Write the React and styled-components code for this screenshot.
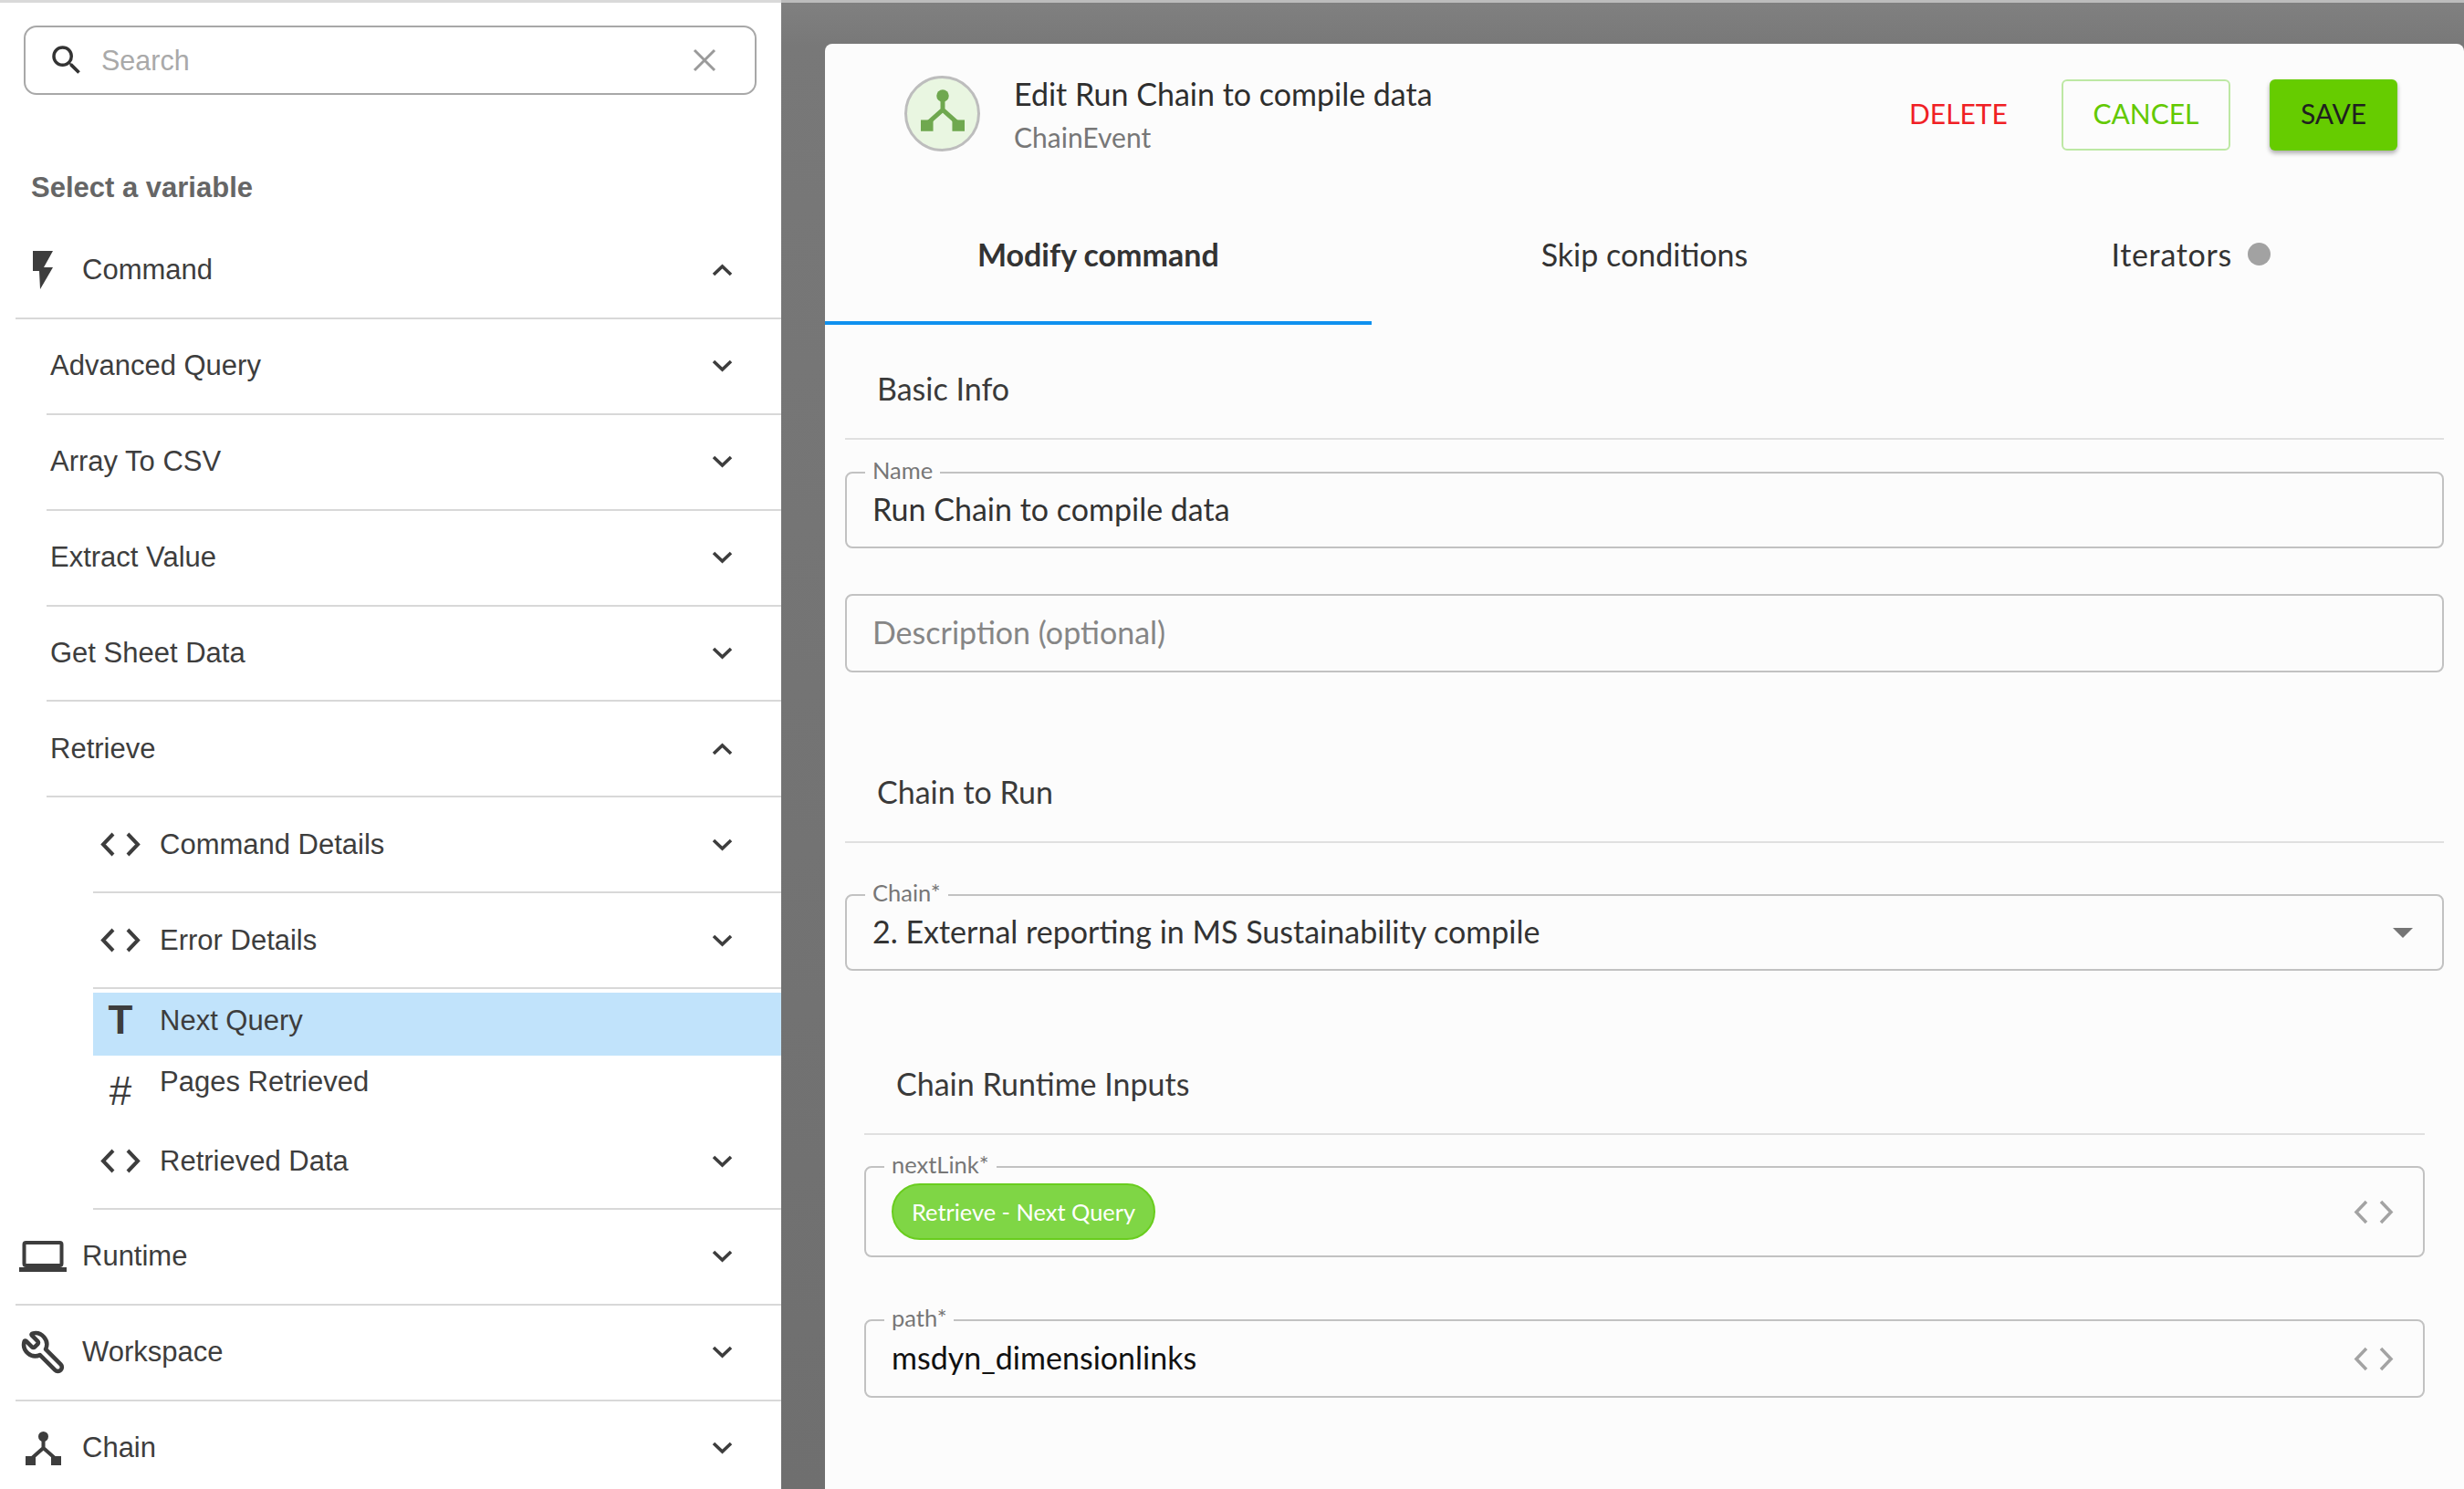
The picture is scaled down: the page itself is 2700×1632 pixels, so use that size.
import React from 'react';
import styled, { createGlobalStyle } from 'styled-components';
import { Wrench } from 'lucide-react';

const GlobalStyle = createGlobalStyle`
  html, body {
    margin: 0;
    padding: 0;
    background: #fff;
  }
  * {
    box-sizing: border-box;
  }
`;

const Page = styled.div`
  display: flex;
  width: 2700px;
  height: 1632px;
  overflow: hidden;
`;

/* sidebar */

const Sidebar = styled.aside`
  width: 856px;
  flex: none;
  height: 100%;
  background: #fff;
  border-top: 3px solid #d9d9d9;
  font-family: 'Liberation Sans', Arial, sans-serif;
  color: #3d3d3d;
`;

const SearchBox = styled.div`
  display: flex;
  align-items: center;
  height: 76px;
  margin: 25px 27px 0 26px;
  padding: 0 42px 0 24px;
  border: 2px solid #a8a8a8;
  border-radius: 14px;
`;

const SearchText = styled.span`
  flex: 1;
  margin-left: 17px;
  font-size: 30.5px;
  color: #a9a9a9;
`;

const SidebarTitle = styled.div`
  margin: 82px 0 19px 34px;
  height: 40px;
  line-height: 40px;
  font-size: 31px;
  font-weight: 700;
  color: #666;
`;

const Row = styled.div`
  display: flex;
  align-items: center;
  height: ${p => p.$height || 104.9}px;
  margin-top: ${p => (p.$active ? 4 : 0)}px;
  margin-left: ${p => p.$indent}px;
  padding-left: ${p => (p.$level === 2 ? 4 : 0)}px;
  padding-right: 53px;
  border-bottom: ${p => (p.$plain ? 'none' : '2px solid #d8d8d8')};
  background: ${p => (p.$active ? '#c1e3fb' : 'transparent')};
  font-size: 31px;
`;

const IconSlot = styled.span`
  display: flex;
  align-items: center;
  justify-content: center;
  flex: none;
  width: 60px;
  margin-right: 13px;
`;

const RowLabel = styled.span`
  flex: 1;
  position: relative;
  top: ${p => p.$shift || 0}px;
`;

const TypeGlyph = styled.span`
  font-size: ${p => p.$size}px;
  font-weight: ${p => p.$weight};
  line-height: 1;
  position: relative;
  top: ${p => p.$shift}px;
`;

const FlippedWrench = styled(Wrench)`
  transform: scaleX(-1);
`;

const iconColor = '#3d3d3d';

const BoltIcon = () => (
  <svg width="22" height="42" viewBox="0 0 22 42">
    <polygon points="0,0 22,0 12,18 22,18 8,42 7,22 0,22" fill={iconColor} />
  </svg>
);

const LaptopIcon = () => (
  <svg width="52" height="34" viewBox="0 0 52 34">
    <rect x="5.5" y="2" width="41" height="25" rx="2" fill="none" stroke={iconColor} strokeWidth="4" />
    <rect x="0" y="29" width="52" height="5" fill={iconColor} />
  </svg>
);

const ChainGlyph = ({ color = iconColor, width = 39, height = 37, className }) => (
  <svg className={className} width={width} height={height} viewBox="0 0 39 37">
    <circle cx="19.5" cy="5.5" r="5.5" fill={color} />
    <path d="M19.5 8 V18 L6 30 M19.5 18 L33 30" fill="none" stroke={color} strokeWidth="4" />
    <rect x="0" y="27" width="11" height="10" fill={color} />
    <rect x="28" y="27" width="11" height="10" fill={color} />
  </svg>
);

const AvatarGlyph = styled(ChainGlyph)`
  margin-top: -8px;
`;

const CodeIcon = ({ color = iconColor, strokeWidth = 4, width = 44, height = 27 }) => (
  <svg width={width} height={height} viewBox="0 0 44 27">
    <path
      d="M14 2 L3 13.5 L14 25 M30 2 L41 13.5 L30 25"
      fill="none"
      stroke={color}
      strokeWidth={strokeWidth}
    />
  </svg>
);

const Chevron = ({ up }) => (
  <svg width="23" height="14" viewBox="0 0 23 14">
    <path
      d={up ? 'M2 12 L11.5 3 L21 12' : 'M2 2 L11.5 11 L21 2'}
      fill="none"
      stroke={iconColor}
      strokeWidth="3.6"
    />
  </svg>
);

const rows = [
  { label: 'Command', level: 1, icon: <BoltIcon />, open: true },
  { label: 'Advanced Query', level: 2 },
  { label: 'Array To CSV', level: 2 },
  { label: 'Extract Value', level: 2 },
  { label: 'Get Sheet Data', level: 2 },
  { label: 'Retrieve', level: 2, open: true },
  { label: 'Command Details', level: 3, icon: <CodeIcon /> },
  { label: 'Error Details', level: 3, icon: <CodeIcon /> },
  {
    label: 'Next Query',
    level: 3,
    leaf: true,
    active: true,
    height: 69,
    shift: -4,
    icon: <TypeGlyph $size={44} $weight={700} $shift={-5}>T</TypeGlyph>
  },
  {
    label: 'Pages Retrieved',
    level: 3,
    leaf: true,
    height: 64,
    shift: -3,
    icon: <TypeGlyph $size={44} $weight={400} $shift={7}>#</TypeGlyph>
  },
  { label: 'Retrieved Data', level: 3, icon: <CodeIcon /> },
  { label: 'Runtime', level: 1, icon: <LaptopIcon /> },
  { label: 'Workspace', level: 1, icon: <FlippedWrench size={50} color={iconColor} strokeWidth={2.2} /> },
  { label: 'Chain', level: 1, icon: <ChainGlyph /> }
];

const indents = { 1: 17, 2: 51, 3: 102 };

const VariableRow = ({ row }) => (
  <Row
    $indent={indents[row.level]}
    $level={row.level}
    $height={row.height}
    $plain={row.leaf}
    $active={row.active}
  >
    {row.icon && <IconSlot>{row.icon}</IconSlot>}
    <RowLabel $shift={row.shift}>{row.label}</RowLabel>
    {!row.leaf && <Chevron up={row.open} />}
  </Row>
);

/* modal */

const Scrim = styled.main`
  flex: 1;
  height: 100%;
  padding: 45px 0 0 48px;
  border-top: 3px solid #bcbcbc;
  background: linear-gradient(180deg, #808080 0, #787878 48px, #6f6f6f 100%);
`;

const Modal = styled.section`
  height: 100%;
  background: #fcfcfc;
  border-radius: 8px 8px 0 0;
  font-family: Lato, 'Open Sans', sans-serif;
  color: #333;
`;

const Header = styled.header`
  display: flex;
  height: 157px;
  padding: 35px 73px 0 87px;
`;

const Avatar = styled.div`
  display: flex;
  align-items: center;
  justify-content: center;
  flex: none;
  width: 83px;
  height: 83px;
  border: 3px solid #bdbdbd;
  border-radius: 50%;
  background: #e9f6e1;
`;

const HeaderText = styled.div`
  flex: 1;
  margin-left: 37px;
`;

const Title = styled.div`
  font-size: 34px;
  line-height: 40px;
  color: #2e2e2e;
`;

const Subtitle = styled.div`
  margin-top: 7px;
  font-size: 30px;
  line-height: 40px;
  color: #777;
`;

const Button = styled.button`
  height: 78px;
  margin-top: 4px;
  padding: 0 0 4px;
  border: none;
  border-radius: 6px;
  background: transparent;
  font-family: inherit;
  font-size: 30px;
  cursor: pointer;
`;

const DeleteButton = styled(Button)`
  width: 105px;
  margin-right: 62px;
  color: #f01f25;
`;

const CancelButton = styled(Button)`
  width: 185px;
  margin-right: 43px;
  border: 2.5px solid #bde8a4;
  color: #63c900;
`;

const SaveButton = styled(Button)`
  width: 140px;
  background: #66cc00;
  color: #1f1f1f;
  box-shadow: 0 3px 5px rgba(0, 0, 0, 0.32);
`;

const Tabs = styled.nav`
  display: flex;
  height: 151px;
`;

const Tab = styled.div`
  display: flex;
  align-items: center;
  justify-content: center;
  flex: 1;
  gap: 17px;
  border-bottom: 4px solid ${p => (p.$active ? '#0f91ef' : 'transparent')};
  font-size: 34px;
  font-weight: ${p => (p.$active ? 700 : 400)};
  letter-spacing: ${p => p.$spacing || 0}px;
`;

const Dot = styled.span`
  width: 25px;
  height: 25px;
  border-radius: 50%;
  background: #a2a2a2;
`;

const Body = styled.div`
  padding: 0 22px;
`;

const Nested = styled.div`
  padding: 0 21px;
`;

const SectionTitle = styled.h3`
  margin: ${p => p.$top - 2}px 0 0;
  padding: 0 0 30px 35px;
  border-bottom: 2px solid #e0e0e0;
  font-size: 34px;
  font-weight: 400;
  line-height: 48px;
  color: #3a3a3a;
`;

const Field = styled.div`
  position: relative;
  display: flex;
  align-items: center;
  height: ${p => p.$height}px;
  margin-top: ${p => p.$top}px;
  padding: 0 32px 0 28px;
  border: 2px solid #c2c2c2;
  border-radius: 8px;
`;

const FieldLabel = styled.label`
  position: absolute;
  top: -18px;
  left: 20px;
  padding: 0 8px 0 8px;
  background: #fcfcfc;
  font-size: 25.5px;
  line-height: 28px;
  color: #777;
`;

const FieldValue = styled.span`
  flex: 1;
  position: relative;
  top: -2px;
  font-size: 34px;
  color: ${p => (p.$placeholder ? '#868686' : p.$dark ? '#111' : '#333')};
`;

const ChipHolder = styled.div`
  flex: 1;
`;

const Chip = styled.span`
  display: inline-flex;
  align-items: center;
  height: 62px;
  padding: 0 20px;
  border: 2px solid #69cd1e;
  border-radius: 31px;
  background: #7fd645;
  font-size: 25.4px;
  color: #fff;
`;

const Caret = styled.span`
  width: 0;
  height: 0;
  border-left: 11px solid transparent;
  border-right: 11px solid transparent;
  border-top: 11px solid #757575;
`;

const CloseIcon = () => (
  <svg width="26" height="26" viewBox="0 0 26 26">
    <path d="M2 2 L24 24 M24 2 L2 24" fill="none" stroke="#9a9a9a" strokeWidth="3" />
  </svg>
);

const SearchIcon = () => (
  <svg width="42" height="42" viewBox="0 0 24 24">
    <path
      fill="#333"
      d="M15.5 14h-.79l-.28-.27A6.471 6.471 0 0 0 16 9.5 6.5 6.5 0 1 0 9.5 16c1.61 0 3.09-.59 4.23-1.57l.27.28v.79l5 4.99L20.49 19l-4.99-5zm-6 0C7.01 14 5 11.99 5 9.5S7.01 5 9.5 5 14 7.01 14 9.5 11.99 14 9.5 14z"
    />
  </svg>
);

export default function App() {
  return (
    <Page>
      <GlobalStyle />
      <Sidebar>
        <SearchBox>
          <SearchIcon />
          <SearchText>Search</SearchText>
          <CloseIcon />
        </SearchBox>
        <SidebarTitle>Select a variable</SidebarTitle>
        {rows.map(row => (
          <VariableRow key={row.label} row={row} />
        ))}
      </Sidebar>
      <Scrim>
        <Modal>
          <Header>
            <Avatar>
              <AvatarGlyph color="#6fa84f" width={48} height={46} />
            </Avatar>
            <HeaderText>
              <Title>Edit Run Chain to compile data</Title>
              <Subtitle>ChainEvent</Subtitle>
            </HeaderText>
            <DeleteButton>DELETE</DeleteButton>
            <CancelButton>CANCEL</CancelButton>
            <SaveButton>SAVE</SaveButton>
          </Header>
          <Tabs>
            <Tab $active>Modify command</Tab>
            <Tab>Skip conditions</Tab>
            <Tab $spacing={0.7}>
              Iterators
              <Dot />
            </Tab>
          </Tabs>
          <Body>
            <SectionTitle $top={48}>Basic Info</SectionTitle>
            <Field $top={35} $height={84}>
              <FieldLabel>Name</FieldLabel>
              <FieldValue>Run Chain to compile data</FieldValue>
            </Field>
            <Field $top={50} $height={86}>
              <FieldValue $placeholder>Description (optional)</FieldValue>
            </Field>
            <SectionTitle $top={109}>Chain to Run</SectionTitle>
            <Field $top={56} $height={84}>
              <FieldLabel>Chain*</FieldLabel>
              <FieldValue>2. External reporting in MS Sustainability compile</FieldValue>
              <Caret />
            </Field>
            <Nested>
              <SectionTitle $top={102}>Chain Runtime Inputs</SectionTitle>
              <Field $top={34} $height={100}>
                <FieldLabel>nextLink*</FieldLabel>
                <ChipHolder>
                  <Chip>Retrieve - Next Query</Chip>
                </ChipHolder>
                <CodeIcon color="#a3a3a3" strokeWidth={3.5} />
              </Field>
              <Field $top={68} $height={86}>
                <FieldLabel>path*</FieldLabel>
                <FieldValue $dark>msdyn_dimensionlinks</FieldValue>
                <CodeIcon color="#a3a3a3" strokeWidth={3.5} />
              </Field>
            </Nested>
          </Body>
        </Modal>
      </Scrim>
    </Page>
  );
}
